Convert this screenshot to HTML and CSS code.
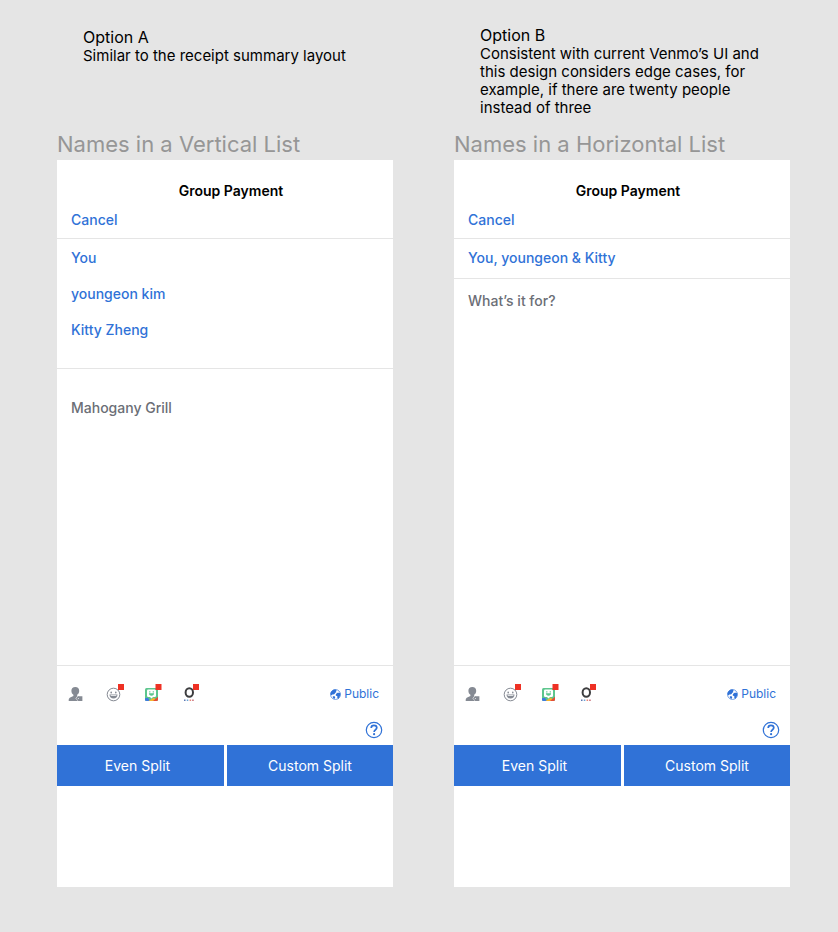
FILE: index.html
```html
<!DOCTYPE html>
<html lang="en">
<head>
<meta charset="utf-8">
<title>Group Payment layout options</title>
<link rel="stylesheet" href="styles.css">
</head>
<body>
<svg class="sprite" aria-hidden="true">
  <symbol id="person" viewBox="0 0 18 18">
    <path fill="#858a93" d="M7.300 3c2.500 0 3.900 1.500 3.900 3.700 0 1.900-.7 3.200-2 4v1.200l2.300 1-1.200 1.500 1 2.600H.7v-1.300c0-1.600 1.300-2.300 4.700-3.800v-1.200C4.100 9.900 3.400 8.600 3.400 6.700 3.400 4.500 4.800 3 7.300 3z"/>
    <path fill="#858a93" d="M8.500 14.500l1.900-2.200h4v4.700h-4z"/>
    <path d="M9.800 12L7.900 14.300l1.900 2.500" fill="none" stroke="#fff" stroke-width=".6"/>
    <circle cx="10.300" cy="14.500" r=".5" fill="#fff"/>
  </symbol>
  <symbol id="smiley" viewBox="0 0 18 18">
    <circle cx="7.500" cy="10.500" r="6.300" fill="none" stroke="#858a93"/>
    <ellipse cx="5.200" cy="8.500" rx=".8" ry="1" fill="#858a93"/>
    <ellipse cx="9.800" cy="8.500" rx=".8" ry="1" fill="#858a93"/>
    <path d="M3.500 10.500h8c0 2.500-1.700 4.100-4 4.100s-4-1.600-4-4.100z" fill="#858a93"/>
    <path d="M4.500 11.200h6l-.3.900H4.800z" fill="#fff"/>
    <path fill="#ee3124" d="M12 0h6v6h-6z"/>
  </symbol>
  <symbol id="sticker" viewBox="0 0 18 18">
    <rect x="1" y="4" width="13" height="13" rx="1.500" fill="#5cc68d"/>
    <path fill="#3d7be0" d="M1 14.200l3-.5 2 3.300H2.500A1.500 1.500 0 0 1 1 15.500z"/>
    <path fill="#f5b52e" d="M4.500 17l5.500-3.500 2.500 3.500z"/>
    <path fill="#e74b36" d="M9 17l5-4.200v2.700a1.500 1.500 0 0 1-1.500 1.500z"/>
    <path fill="#fff" d="M4.300 5.500h6.400a1.300 1.300 0 0 1 1.300 1.300v5a1.300 1.300 0 0 1-1.300 1.300H9l-1.500 1.500L6 13.100H4.300A1.300 1.300 0 0 1 3 11.800v-5a1.300 1.300 0 0 1 1.300-1.300z"/>
    <path fill="#5cc68d" d="M5.200 7.300h1.200v1.200H5.200zM8.700 7.300h1.200v1.200H8.700zM4.900 9.300h5.200c0 1.600-1 2.400-2.600 2.400s-2.600-.8-2.600-2.400z"/>
    <path fill="#ee3124" d="M11.500 0h6v6h-6z"/>
  </symbol>
  <symbol id="holler" viewBox="0 0 18 18">
    <ellipse cx="7.300" cy="8.500" rx="3.700" ry="4.200" fill="none" stroke="#3d3d3f" stroke-width="2"/>
    <path fill="#5b78b5" d="M2 15.500h1.500V17H2z"/>
    <path fill="#68a5d5" d="M4.800 15.500h1.500V17H4.800z"/>
    <path fill="#e88376" d="M7.600 15.500h1.500V17H7.600z"/>
    <path fill="#c86b75" d="M10.200 15.500h1.500V17h-1.500z"/>
    <path fill="#ee3124" d="M11 0h6v6h-6z"/>
  </symbol>
  <symbol id="globe" viewBox="0 0 10 10">
    <circle cx="5" cy="5" r="4.500" fill="#fff" stroke="#3072d7" stroke-width=".6"/>
    <path fill="#3072d7" d="M.4 4.800C.5 2.200 2.500.3 5.200.4l.9.8-.8.8.6.8-1.300.8-.4 1-1.100.5-1-.2-.5.800-.7-.3zM9.500 4.200L9.300 6 7.800 8.900l-1.200-.5.100-1.700-1.500-.8.200-1.400 1.500-1.100 1.700.1zM2.500 6.600l1.700.1.600.9-.8 1.400-1.100-.6z"/>
  </symbol>
  <symbol id="help" viewBox="0 0 18 18">
    <circle cx="9" cy="9" r="7.700" fill="none" stroke="#3072d7" stroke-width="1.200"/>
    <path d="M6.200 6.900c0-1.600 1.200-2.600 2.800-2.600s2.800 1 2.800 2.500c0 2-2.700 2-2.700 4.200" fill="none" stroke="#3072d7" stroke-width="1.700"/>
    <circle cx="9.100" cy="13.200" r="1.100" fill="#3072d7"/>
  </symbol>
</svg>

<main class="board">
  <section class="option">
    <div class="note note-a">
      <p class="note-title">Option A</p>
      <p>Similar to the receipt summary layout</p>
    </div>
    <h2 class="frame-name">Names in a Vertical List</h2>
    <article class="screen">
      <header class="top">
        <h3 class="title">Group Payment</h3>
        <button class="cancel" type="button">Cancel</button>
      </header>
      <ul class="people people-list">
        <li>You</li>
        <li>youngeon kim</li>
        <li>Kitty Zheng</li>
      </ul>
      <textarea class="memo memo-list" aria-label="Payment note">Mahogany Grill</textarea>
      <div class="tools">
        <div class="tool-row">
          <button class="tool" type="button" aria-label="Tag people"><svg><use href="#person"/></svg></button>
          <button class="tool" type="button" aria-label="Emoji"><svg><use href="#smiley"/></svg></button>
          <button class="tool" type="button" aria-label="Bitmoji"><svg><use href="#sticker"/></svg></button>
          <button class="tool" type="button" aria-label="Holler"><svg><use href="#holler"/></svg></button>
          <button class="audience" type="button"><svg><use href="#globe"/></svg>Public</button>
        </div>
        <button class="help" type="button" aria-label="Help"><svg><use href="#help"/></svg></button>
      </div>
      <div class="actions">
        <button class="action" type="button">Even Split</button>
        <button class="action" type="button">Custom Split</button>
      </div>
    </article>
  </section>

  <section class="option">
    <div class="note note-b">
      <p class="note-title">Option B</p>
      <p>Consistent with current Venmo’s UI and this design considers edge cases, for example, if there are twenty people instead of three</p>
    </div>
    <h2 class="frame-name">Names in a Horizontal List</h2>
    <article class="screen">
      <header class="top">
        <h3 class="title">Group Payment</h3>
        <button class="cancel" type="button">Cancel</button>
      </header>
      <p class="people people-line">You, youngeon &amp; Kitty</p>
      <textarea class="memo memo-line" aria-label="Payment note" placeholder="What’s it for?"></textarea>
      <div class="tools">
        <div class="tool-row">
          <button class="tool" type="button" aria-label="Tag people"><svg><use href="#person"/></svg></button>
          <button class="tool" type="button" aria-label="Emoji"><svg><use href="#smiley"/></svg></button>
          <button class="tool" type="button" aria-label="Bitmoji"><svg><use href="#sticker"/></svg></button>
          <button class="tool" type="button" aria-label="Holler"><svg><use href="#holler"/></svg></button>
          <button class="audience" type="button"><svg><use href="#globe"/></svg>Public</button>
        </div>
        <button class="help" type="button" aria-label="Help"><svg><use href="#help"/></svg></button>
      </div>
      <div class="actions">
        <button class="action" type="button">Even Split</button>
        <button class="action" type="button">Custom Split</button>
      </div>
    </article>
  </section>
</main>
</body>
</html>
```
FILE: styles.css
```css
* { box-sizing: border-box; margin: 0; padding: 0; }

body {
  background: #e5e5e5;
  color: #000;
  font-family: Inter, "Liberation Sans", sans-serif;
}

button {
  border: 0;
  background: none;
  color: #3072d7;
  font: inherit;
  cursor: pointer;
}

svg { display: block; }

.sprite { display: none; }

.board {
  display: grid;
  grid-template-columns: 1fr 1fr;
  gap: 61px;
  min-height: 100vh;
  padding: 0 48px 45px 57px;
}

.option {
  display: grid;
  grid-template-rows: 128px 32px 1fr;
}

.note {
  padding: 0 26px;
  font-size: 15px;
  line-height: 18px;
}

.note-title {
  font-size: 16px;
  line-height: 20px;
}

.note-a { padding-top: 27px; }
.note-b { padding-top: 25px; }

.frame-name {
  color: #969696;
  font-size: 22px;
  font-weight: 400;
  line-height: 32px;
}

.screen {
  display: flex;
  flex-direction: column;
  padding-bottom: 101px;
  background: #fff;
}

.top {
  padding: 21px 14px 8px;
  border-bottom: 1px solid #e5e5e5;
  font-size: 14px;
  line-height: 20px;
}

.title {
  padding-left: 12px;
  font-size: 14px;
  font-weight: 600;
  line-height: 20px;
  text-align: center;
}

.cancel {
  display: block;
  margin-top: 9px;
  font-weight: 500;
}

.people {
  padding: 9px 14px;
  border-bottom: 1px solid #e5e5e5;
  color: #3072d7;
  font-size: 14px;
  font-weight: 500;
  line-height: 20px;
  list-style: none;
}

.people-list {
  display: grid;
  gap: 16px;
  padding-bottom: 28px;
}

.people-line { padding-bottom: 10px; }

.memo {
  flex: 1;
  display: block;
  width: 100%;
  border: 0;
  background: none;
  color: #6b6e76;
  font: 500 14px/20px Inter, "Liberation Sans", sans-serif;
  outline: 0;
  resize: none;
}

.memo::placeholder { color: #6b6e76; }
.memo-list { padding: 29px 14px; }
.memo-line { padding: 12px 14px; }

.tools {
  padding: 18px 10px 6px 11px;
  border-top: 1px solid #e5e5e5;
}

.tool-row {
  display: flex;
  gap: 20px;
  align-items: center;
}

.tool svg,
.help svg { width: 18px; height: 18px; }

.audience {
  display: flex;
  gap: 3px;
  align-items: center;
  margin-left: auto;
  padding: 2px 4px 0 0;
  font-size: 12px;
  line-height: 16px;
}

.audience svg { width: 11px; height: 11px; }

.help {
  display: block;
  margin: 19px 0 0 auto;
}

.actions {
  display: grid;
  grid-template-columns: 167fr 166fr;
  gap: 3px;
}

.action {
  height: 41px;
  padding-right: 6px;
  background: #3072d7;
  color: #fff;
  font-size: 14px;
}

.action:last-child { padding-right: 0; }
```
